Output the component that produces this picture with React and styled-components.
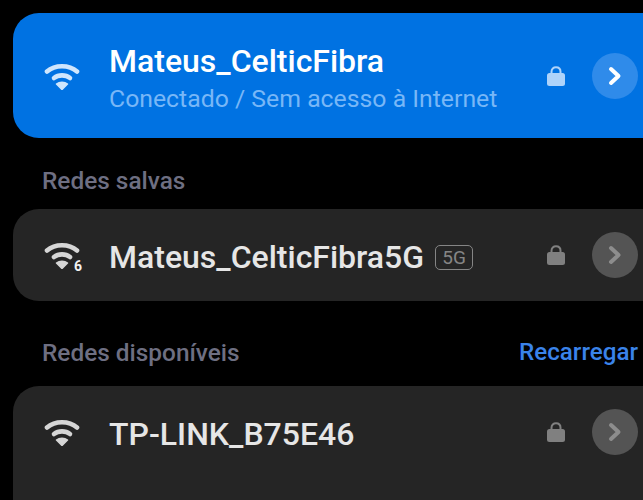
import styled, {createGlobalStyle} from "styled-components";

const GlobalStyle = createGlobalStyle`
  html, body {
    margin: 0;
    padding: 0;
    background-color: #000;
  }

  body {
    font-family: "Roboto", "Liberation Sans", sans-serif;
  }
`

const Page = styled.div`
  height: 500px;
  padding: 13px 0 0 13px;
  box-sizing: border-box;
  overflow: hidden;
  background-color: #000;
`

const Card = styled.div`
  border-radius: 26px 0 0 26px;
  background-color: ${props => props.$active ? "#0072e2" : "#252525"};
  height: ${props => props.$height}px;
`

const Row = styled.div`
  display: flex;
  align-items: center;
  height: ${props => props.$height}px;
  padding: 0 5px 0 31px;
`

const WifiBox = styled.div`
  position: relative;
  flex-shrink: 0;
  width: 36px;
  height: 28px;
  margin-right: 29px;
  color: ${props => props.$active ? "#cfe6fd" : "#d6d6d6"};
`

const WifiBadge = styled.span`
  position: absolute;
  right: -2px;
  bottom: -4px;
  font-size: 14px;
  line-height: 14px;
  font-weight: 700;
  color: #f2f2f2;
`

const TextBox = styled.div`
  display: flex;
  flex-direction: column;
  gap: 6px;
  padding-top: 4px;
`

const NameLine = styled.div`
  display: flex;
  align-items: center;
  gap: 11px;
`

const Name = styled.span`
  font-size: 32px;
  line-height: 36px;
  font-weight: 500;
  color: ${props => props.$active ? "#ffffff" : "#e6e6e6"};
`

const Status = styled.span`
  font-size: 24.8px;
  line-height: 28px;
  color: #78b7f7;
`

const Tag = styled.span`
  display: flex;
  align-items: center;
  justify-content: center;
  width: 36px;
  height: 23px;
  border: 1px solid #858585;
  border-radius: 5px;
  font-size: 19px;
  color: #858585;
`

const LockBox = styled.div`
  display: flex;
  margin-left: auto;
  margin-right: 27px;
  color: ${props => props.$active ? "#aed3fa" : "#808080"};
`

const ArrowButton = styled.div`
  display: flex;
  align-items: center;
  justify-content: center;
  width: 46px;
  height: 46px;
  border-radius: 50%;
  background-color: ${props => props.$active ? "#2f8bea" : "#545454"};
  color: ${props => props.$active ? "#ffffff" : "#8d8d8d"};
`

const SectionHead = styled.div`
  display: flex;
  align-items: center;
  justify-content: space-between;
  box-sizing: border-box;
  height: ${props => props.$height}px;
  padding: ${props => props.$top}px 5px 0 29px;
`

const SectionTitle = styled.span`
  font-size: 24.4px;
  font-weight: 500;
  color: #6e6f82;
`

const Reload = styled.span`
  font-size: 24.2px;
  font-weight: 500;
  color: #3a83ea;
`

const WifiIcon = () => (
  <svg width="36" height="28" viewBox="0 0 36 28" fill="none">
    <path d="M3 9.5C11 2.5 25 2.5 33 9.5" stroke="currentColor" strokeWidth="4.6" strokeLinecap="round"/>
    <path d="M10 16C14.5 12.5 21.5 12.5 26 16" stroke="currentColor" strokeWidth="4.6" strokeLinecap="round"/>
    <path d="M18 27.5L12.5 22C15.5 19.5 20.5 19.5 23.5 22Z" fill="currentColor" stroke="currentColor" strokeWidth="1.5" strokeLinejoin="round"/>
  </svg>
)

const LockIcon = () => (
  <svg width="18" height="20" viewBox="0 0 18 20" fill="none">
    <path d="M4.5 8V5.8C4.5 3 6.4 1.3 9 1.3S13.5 3 13.5 5.8V8" stroke="currentColor" strokeWidth="2"/>
    <rect x="0" y="7" width="18" height="13" rx="2.5" fill="currentColor"/>
  </svg>
)

const ChevronIcon = () => (
  <svg width="14" height="20" viewBox="0 0 14 20" fill="none">
    <path d="M3 3L10.5 10L3 17" stroke="currentColor" strokeWidth="4" strokeLinecap="round" strokeLinejoin="round"/>
  </svg>
)

const NetworkRow = ({name, status, tag, badge, active, height}) => (
  <Row $height={height}>
    <WifiBox $active={active}>
      <WifiIcon/>
      {badge && <WifiBadge>{badge}</WifiBadge>}
    </WifiBox>
    <TextBox>
      <NameLine>
        <Name $active={active}>{name}</Name>
        {tag && <Tag>{tag}</Tag>}
      </NameLine>
      {status && <Status>{status}</Status>}
    </TextBox>
    <LockBox $active={active}>
      <LockIcon/>
    </LockBox>
    <ArrowButton $active={active}>
      <ChevronIcon/>
    </ArrowButton>
  </Row>
)

export default function App() {
  return (
    <Page>
      <GlobalStyle/>
      <Card $active $height={125}>
        <NetworkRow active height={125} name="Mateus_CelticFibra" status="Conectado / Sem acesso à Internet"/>
      </Card>
      <SectionHead $height={71} $top={13}>
        <SectionTitle>Redes salvas</SectionTitle>
      </SectionHead>
      <Card $height={92}>
        <NetworkRow height={92} name="Mateus_CelticFibra5G" tag="5G" badge="6"/>
      </Card>
      <SectionHead $height={85} $top={17}>
        <SectionTitle>Redes disponíveis</SectionTitle>
        <Reload>Recarregar</Reload>
      </SectionHead>
      <Card $height={140}>
        <NetworkRow height={92} name="TP-LINK_B75E46"/>
      </Card>
    </Page>
  );
}
